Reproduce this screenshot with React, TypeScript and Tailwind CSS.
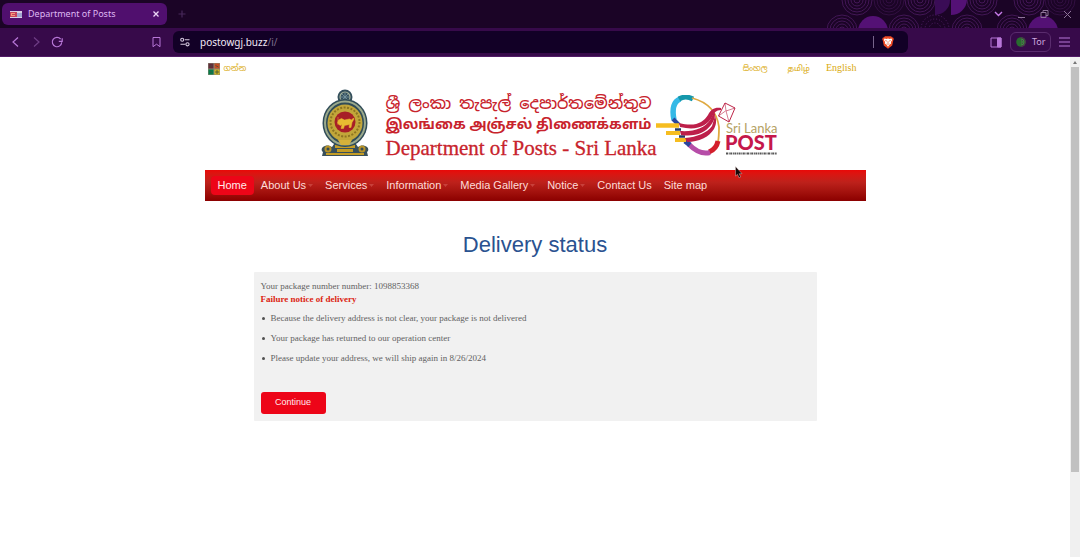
import React from "react";

const ringsTop = [137, 169, 200, 262, 309, 340];
const ringsBottom = [122, 184, 247, 292];

function Rings({ cx, cy, dim }: { cx: number; cy: number; dim?: boolean }) {
  return (
    <g fill="none" stroke="#54206b" strokeWidth="1" opacity={dim ? 0.4 : 0.7}>
      {[3, 6, 9, 12, 15].map((r) => (
        <circle key={r} cx={cx} cy={cy} r={r} />
      ))}
    </g>
  );
}

function TabStripArt() {
  return (
    <svg className="absolute right-0 top-0" width="360" height="28" viewBox="0 0 360 28" aria-hidden="true">
      {ringsTop.map((x, i) => (
        <Rings key={x} cx={x} cy={0} dim={i === 1 || i === 5} />
      ))}
      <path d="M215 0h15a15 15 0 0 1-15 15z" fill="#3a0c56" />
      <path d="M231 0h16a16 16 0 0 1-16 15z" fill="#541175" />
      {ringsBottom.map((x) => (
        <g key={x}>
          <circle cx={x} cy={30} r="15" fill="#1b0426" />
          <Rings cx={x} cy={30} />
        </g>
      ))}
      <g fill="none" stroke="#54206b" strokeDasharray="1 2">
        <circle cx="215" cy="29" r="14" />
        <circle cx="215" cy="29" r="10" />
        <circle cx="215" cy="29" r="6" />
      </g>
      <circle cx="153" cy="31" r="15" fill="#541175" />
      <circle cx="323" cy="31" r="15" fill="#541175" />
    </svg>
  );
}

function Flag() {
  return (
    <svg width="12" height="7" viewBox="0 0 12 7" aria-hidden="true">
      <rect width="12" height="7" fill="#d9cfe4" />
      <rect y="1" width="7" height="5" fill="#c7425c" />
      <path d="M1 2h4v1H2v1h3v1H1z" fill="#f29a7b" />
      <path d="M7 3h5M7 5h5" stroke="#6b7bbd" strokeWidth="1" />
    </svg>
  );
}

function TabStrip() {
  return (
    <div className="relative flex h-7 items-start bg-[#1b0426] pl-[2px] pt-[3px]">
      <TabStripArt />
      <div className="flex h-[22px] w-[165px] items-center rounded-md bg-[#500f6e] pl-2 pr-[7px]">
        <Flag />
        <span className="ml-[6px] flex-1 text-[9px] text-[#dfb8f2]">Department of Posts</span>
        <button aria-label="Close tab">
          <svg width="8" height="8" viewBox="0 0 8 8" stroke="#ecd6f7" strokeWidth="1.3">
            <path d="M1.5 1.5l5 5M6.5 1.5l-5 5" />
          </svg>
        </button>
      </div>
      <button aria-label="New tab" className="ml-[11px] mt-[7px]">
        <svg width="8" height="8" viewBox="0 0 8 8" stroke="#48295a" strokeWidth="1.2">
          <path d="M4 0.5v7M0.5 4h7" />
        </svg>
      </button>
      <div className="relative ml-auto mr-2 mt-[6px] flex items-center gap-[14px] text-[#8e7499]">
        <button aria-label="Search tabs">
          <svg width="9" height="10" viewBox="0 0 9 10" fill="none" stroke="#c77bea" strokeWidth="1.4">
            <path d="M1 3l3.5 3.5L8 3" />
          </svg>
        </button>
        <button aria-label="Minimize">
          <svg width="9" height="10" viewBox="0 0 9 10" stroke="currentColor">
            <path d="M1 8.5h7" />
          </svg>
        </button>
        <button aria-label="Restore">
          <svg width="9" height="10" viewBox="0 0 9 10" fill="none" stroke="currentColor">
            <path d="M1 3.5h5v5H1zM3 3.500v-2h5v5H6" />
          </svg>
        </button>
        <button aria-label="Close window">
          <svg width="9" height="10" viewBox="0 0 9 10" stroke="currentColor">
            <path d="M1 2l7 7M8 2l-7 7" />
          </svg>
        </button>
      </div>
    </div>
  );
}

function Toolbar() {
  return (
    <div className="flex h-[29px] items-center border-b border-[#511a66] bg-[#370a4a] pl-[11px] pr-[10px] text-[#b877d8]">
      <button aria-label="Back">
        <svg width="9" height="12" viewBox="0 0 9 12" fill="none" stroke="currentColor" strokeWidth="1.2">
          <path d="M7 1.5L2 6l5 4.5" />
        </svg>
      </button>
      <button aria-label="Forward" className="ml-3">
        <svg width="9" height="12" viewBox="0 0 9 12" fill="none" stroke="#6f3d86" strokeWidth="1.2">
          <path d="M2 1.5L7 6l-5 4.5" />
        </svg>
      </button>
      <button aria-label="Reload" className="ml-[10px]">
        <svg width="12" height="12" viewBox="0 0 12 12" fill="none" stroke="currentColor" strokeWidth="1.2">
          <path d="M10.7 6.2A4.7 4.7 0 1 1 9.6 3M11.2 2.3v3H7.8" />
        </svg>
      </button>
      <button aria-label="Bookmark" className="ml-[88px]">
        <svg width="11" height="12" viewBox="0 0 11 12" fill="none" stroke="currentColor">
          <path d="M2 1.5h7v9.2L5.5 8.2 2 10.7z" />
        </svg>
      </button>
      <div className="ml-[11px] mr-[82px] flex h-[22px] flex-1 items-center rounded-md bg-[#120026] px-[7px]">
        <svg width="10" height="10" viewBox="0 0 10 10" fill="none" stroke="#d6c9e0" strokeWidth="1.1" aria-hidden="true">
          <circle cx="2.2" cy="2.7" r="1.5" />
          <path d="M4.8 2.7H9.5M.5 7.3h4.7" />
          <circle cx="7.5" cy="7.3" r="1.6" />
        </svg>
        <div className="relative ml-[10px] flex flex-1 items-center text-[10px]">
          <span className="text-[#f1e9f6]">postowgj.buzz</span>
          <span className="text-[#7c6d8d]">/i/</span>
          <input
            aria-label="Address"
            className="absolute inset-0 w-full bg-transparent text-transparent outline-none"
            defaultValue=""
          />
        </div>
        <span className="mr-2 h-3 w-px bg-[#77648b]" />
        <svg width="12" height="13" viewBox="0 0 12 13" aria-hidden="true" className="mr-[7px]">
          <path d="M3 .3h6l1 1 1.3.4.5 1.6-.5 1L10.2 9.5 6 12.8 1.8 9.5.7 4.3l-.5-1L.7 1.7 2 1.300z" fill="#ee4b25" />
          <path d="M2.5 2.6l2 .3L6 2.5l1.5.4 2-.3.7 1.400-1.300 2.100.2 1.500-1.500.9L6 10.700 4.400 8.500l-1.500-.9.2-1.500L1.800 4z" fill="#fff" />
          <path d="M3.2 4.5l1.800.6M8.800 4.500L7 5.100M6 5.200v2M4.700 7.700L6 8.300l1.300-.6" stroke="#ee5a30" strokeWidth=".7" fill="none" />
        </svg>
      </div>
      <div className="flex shrink-0 items-center">
        <button aria-label="Sidebar">
          <svg width="12" height="11" viewBox="0 0 12 11" fill="none" stroke="currentColor">
            <path d="M1 1h10v9H1z" />
            <path d="M7.5 1H11v9H7.500z" fill="currentColor" />
          </svg>
        </button>
        <button className="ml-2 flex h-5 w-[41px] items-center gap-[6px] rounded-md border border-[#5a2c6e] pl-[5px] text-[9px] text-[#cda9df]">
          <svg width="10" height="10" viewBox="0 0 10 10" aria-hidden="true">
            <circle cx="5" cy="5" r="4.8" fill="#286c2f" />
            <path d="M5 .2a4.8 4.8 0 0 1 0 9.600z" fill="#4b3b4a" />
            <path d="M5 2a3 3 0 0 1 0 6M5 3.700a1.300 1.300 0 0 1 0 2.600" fill="none" stroke="#35993a" />
          </svg>
          Tor
        </button>
        <button aria-label="Menu" className="ml-2">
          <svg width="11" height="10" viewBox="0 0 11 10" stroke="currentColor" strokeWidth="1.2">
            <path d="M0 1h11M0 5h11M0 9h11" />
          </svg>
        </button>
      </div>
    </div>
  );
}

function LanguageBar() {
  return (
    <div className="flex h-6 items-center pl-[3px] pr-[9px] text-[10px] text-[#d9a90c] [font-family:'Liberation_Serif','Noto_Sans_Sinhala','Noto_Sans_Tamil',serif]">
      <svg width="12" height="12" viewBox="0 0 12 12" aria-hidden="true">
        <rect width="12" height="12" fill="#8a8a72" />
        <rect x=".5" y=".5" width="5" height="5" fill="#632b3c" />
        <rect x="6.5" y=".5" width="5" height="5" fill="#c84d24" />
        <rect x=".5" y="6.5" width="5" height="5" fill="#087b4b" />
        <rect x="6.5" y="6.5" width="5" height="5" fill="#d3b51e" />
        <path d="M1.5 3h3M2 8.5l2 1M7.5 2.5l3 1.500M8 8h2v2H8z" stroke="#43503b" strokeWidth=".8" fill="none" />
      </svg>
      <a href="#go" className="ml-1 text-[8px]">ගන්න</a>
      <nav aria-label="Language" className="ml-auto flex items-center">
        <a href="#si" className="text-[8px]">සිංහල</a>
        <a href="#ta" className="ml-5 text-[8px]">தமிழ்</a>
        <a href="#en" className="ml-4 pb-[3px]">English</a>
      </nav>
    </div>
  );
}

function Emblem() {
  return (
    <svg width="50" height="68" viewBox="0 0 50 68" aria-hidden="true">
      <path d="M5 57c-4 1-4 5-2 6l-1 4h46l-1-4c2-1 2-5-2-6-3-1-5 0-7 1l-4-6H16l-4 6c-2-1-4-2-7-1z" fill="#39505a" />
      <path d="M15 56h20v3H15zM17 60h16v3H17zM6 64h38v2H6z" fill="#c49d25" />
      <circle cx="8" cy="60" r="3.5" fill="#b69228" />
      <circle cx="42" cy="60" r="3.5" fill="#b69228" />
      <circle cx="8" cy="60" r="1.5" fill="#344b55" />
      <circle cx="42" cy="60" r="1.5" fill="#344b55" />
      <circle cx="25" cy="8" r="7.5" fill="#344f5c" />
      <circle cx="25" cy="8" r="5" fill="none" stroke="#a3b09b" strokeWidth="1.2" />
      <path d="M25 4v8M21 8h8M22 5l6 6M28 5l-6 6" stroke="#7998a2" strokeWidth=".8" />
      <ellipse cx="25" cy="34" rx="22.5" ry="24" fill="#314c58" />
      <ellipse cx="25" cy="34" rx="20" ry="21.5" fill="none" stroke="#9ba98b" strokeWidth="2" />
      <ellipse cx="25" cy="34" rx="17.5" ry="18.5" fill="#c2a63a" />
      <circle cx="25" cy="33" r="14.5" fill="none" stroke="#8d7421" strokeWidth="2" strokeDasharray="2 1.5" />
      <circle cx="25" cy="33" r="10.500" fill="#a71f27" />
      <path d="M17.500 34l1-3 3-1.500 3 1.500 5-1 2 1 2-2 .5 1-2 3.500-1 5h-2l.5-3-5 1-1 3h-2.500l1-4-2 1zM18 28v8" fill="#e8bc31" stroke="#e8bc31" strokeWidth=".5" />
      <path d="M18 51h14l-3 5h-8z" fill="#d5b13a" />
    </svg>
  );
}

function PostLogo() {
  return (
    <svg width="124" height="66" viewBox="0 0 124 66" role="img" aria-label="Sri Lanka Post">
      <g fill="none">
        <path d="M18 25C16 15 17 7 24 4" stroke="#35b9e6" strokeWidth="5.5" />
        <path d="M23 4c5-3 10-2 14 0" stroke="#1598ab" strokeWidth="5" />
        <path d="M36 3c15 4 25 14 27 29 0 6 0 10-1 15" stroke="#dfa940" strokeWidth="1.8" />
        <path d="M62 46c-1 5-4 9-9 11" stroke="#d31f2c" strokeWidth="5" />
        <path d="M54 57.500c-7 2-15-2-21-8" stroke="#b64da8" strokeWidth="5" />
        <path d="M34 50l-5-4" stroke="#29459c" strokeWidth="5" />
        <path d="M17 24l6 6" stroke="#29459c" strokeWidth="4" />
      </g>
      <g fill="none">
        <path d="M0 30.500h23" stroke="#f6bd20" strokeWidth="4.5" />
        <path d="M10 38h14M19 45h11" stroke="#f6bd20" strokeWidth="4" />
        <path d="M19 34.500h6M23 41.500h6" stroke="#253b67" strokeWidth="2.5" />
      </g>
      <g fill="#bd1f4a">
        <path d="M23 28c16 4 24 0 29-8 3-6 7-8 13-7v2c-5 0-7 3-9 7-5 9-15 14-32 10z" />
        <path d="M24 36c14 1 25-3 30-11l4-8 1 2c0 3-1 7-4 11-6 8-16 12-30 10z" />
        <path d="M29 43c12-1 22-5 27-12l3-10c2 5 1 9-1 13-5 8-15 13-27 13z" />
      </g>
      <path d="M69 8l10 5-6 14-10.500-6z" fill="#fff" stroke="#bd2548" strokeWidth="1" />
      <path d="M69 8l1 8 9-3M62.500 21l7-5M73 27l-3-11" fill="none" stroke="#bd2548" strokeWidth=".6" />
      <text x="70" y="38" fontSize="13" fill="#b5a264" fontFamily="Lato, sans-serif">Sri Lanka</text>
      <text x="69" y="55" fontSize="20" fontWeight="900" fill="#c5184b" fontFamily="Lato, sans-serif">POST</text>
      <path d="M70 58.500h51" stroke="#555" strokeWidth="2" strokeDasharray="2 .7 1 .5" />
    </svg>
  );
}

function Banner() {
  return (
    <header className="flex h-[89px] items-start pl-[115px] pt-[8px]">
      <Emblem />
      <div className="ml-4 flex w-[266px] shrink-0 flex-col whitespace-nowrap pt-1 text-[#c8232c]">
        <span className="h-[22px] text-[16px] font-medium leading-[22px] [font-family:'Noto_Sans_Sinhala','Noto_Sans',sans-serif]">
          ශ්‍රී ලංකා තැපැල් දෙපාර්තමේන්තුව
        </span>
        <span className="h-[22px] text-[14px] font-bold leading-[22px] [font-family:'Noto_Sans_Tamil','Noto_Sans',sans-serif]">
          இலங்கை அஞ்சல் திணைக்களம்
        </span>
        <span className="h-[22px] text-[21px] leading-[22px] [-webkit-text-stroke:0.3px_#c8232c] [font-family:'Liberation_Serif',serif]">
          Department of Posts - Sri Lanka
        </span>
      </div>
      <div className="ml-1 mt-[6px] shrink-0">
        <PostLogo />
      </div>
    </header>
  );
}

const links = [
  { label: "About Us", menu: true },
  { label: "Services", menu: true },
  { label: "Information", menu: true },
  { label: "Media Gallery", menu: true },
  { label: "Notice", menu: true },
  { label: "Contact Us", menu: false },
  { label: "Site map", menu: false },
];

function MainNav() {
  return (
    <nav
      aria-label="Main"
      className="flex h-[31px] items-center bg-linear-to-b from-[#e90808] via-[#bd211b] via-40% to-[#8b0000] pl-[6px] text-[11px] text-[#ffdcd8]"
    >
      <a href="#home" className="mr-[7px] rounded-sm bg-[#ed0518] px-[7px] py-[1px] text-[#ffe9e9]">
        Home
      </a>
      {links.map(({ label, menu }) => (
        <a key={label} href="#section" className={menu ? "mr-3 flex items-center gap-[2px]" : "mr-3"}>
          {label}
          {menu && (
            <svg width="5" height="3" viewBox="0 0 5 3" aria-hidden="true">
              <path d="M0 0h5L2.5 3z" fill="#c8413b" />
            </svg>
          )}
        </a>
      ))}
    </nav>
  );
}

const notes = [
  "Because the delivery address is not clear, your package is not delivered",
  "Your package has returned to our operation center",
  "Please update your address, we will ship again in 8/26/2024",
];

function DeliveryStatus() {
  return (
    <main className="px-[49px] pt-[30px]">
      <h1 className="text-center text-[22px] leading-[28px] text-[#2a5290]">Delivery status</h1>
      <section className="mt-[13px] rounded-[1px] bg-[#f1f1f1] p-[7px] text-[9px] text-[#626262] [font-family:'Liberation_Serif',serif]">
        <p className="leading-[14px]">Your package number number: 1098853368</p>
        <p className="font-bold leading-[13px] text-[#dc1f12]">Failure notice of delivery</p>
        <ul className="mt-[6px] flex flex-col gap-[7px]">
          {notes.map((note) => (
            <li key={note} className="flex items-center gap-[6px] leading-[13px]">
              <span className="ml-px h-[3px] w-[3px] rounded-full bg-[#505050]" />
              {note}
            </li>
          ))}
        </ul>
        <button
          type="button"
          className="mt-[27px] h-[22px] w-[65px] rounded-[3px] bg-[#ed0518] text-[9px] text-[#ffecec] [font-family:'Liberation_Sans',sans-serif]"
        >
          Continue
        </button>
      </section>
    </main>
  );
}

function Scrollbar() {
  return (
    <div className="flex w-[10px] shrink-0 flex-col items-center bg-[#f0f0f0]" aria-hidden="true">
      <svg width="10" height="10" viewBox="0 0 10 10">
        <path d="M3 7h4L5 4z" fill="#777" />
      </svg>
      <div className="h-[81%] w-2 bg-[#c1c1c1]" />
    </div>
  );
}

function Cursor() {
  return (
    <svg className="absolute left-[735px] top-[166px]" width="8" height="13" viewBox="0 0 8 13" aria-hidden="true">
      <path d="M.5.5v9.500l2-1.700 1.500 3.500 1.700-.8-1.500-3.300h2.800z" fill="#140808" stroke="#e8d9d9" strokeWidth=".4" />
    </svg>
  );
}

export default function App() {
  return (
    <div className="relative flex min-h-screen flex-col bg-white [font-family:'Liberation_Sans',sans-serif]">
      <div className="[font-family:'Noto_Sans',sans-serif]">
        <TabStrip />
        <Toolbar />
      </div>
      <div className="flex flex-1">
        <div className="flex-1">
          <div className="mx-auto w-full max-w-[661px]">
            <LanguageBar />
            <Banner />
            <MainNav />
            <DeliveryStatus />
          </div>
        </div>
        <Scrollbar />
      </div>
      <Cursor />
    </div>
  );
}
